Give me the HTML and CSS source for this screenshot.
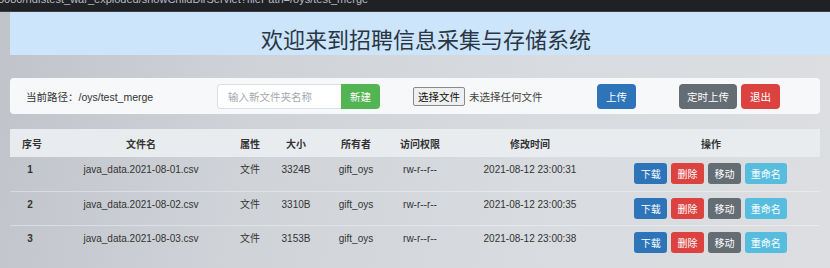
FILE: index.html
```html
<!DOCTYPE html>
<html lang="zh-CN">
<head>
    <meta charset="UTF-8">
    <title>招聘信息采集与存储系统</title>
    <link rel="stylesheet" href="styles.css">
</head>
<body>
<div class="urlbar"><span>8080/hdfstest_war_exploded/showChildDirServlet?filePath=/oys/test_merge</span></div>

<div class="banner">
    <h1>欢迎来到招聘信息采集与存储系统</h1>
</div>

<div class="toolbar">
    <span class="path">当前路径：/oys/test_merge</span>
    <input type="text" class="dirname" placeholder="输入新文件夹名称">
    <button class="btn btn-green btn-new">新建</button>
    <div class="picker">
        <span class="pick-btn">选择文件</span>
        <span class="pick-text">未选择任何文件</span>
    </div>
    <button class="btn btn-blue btn-up">上传</button>
    <button class="btn btn-gray btn-timer">定时上传</button>
    <button class="btn btn-red btn-exit">退出</button>
</div>

<table class="files">
    <colgroup>
        <col style="width:44px">
        <col style="width:174px">
        <col style="width:44px">
        <col style="width:48px">
        <col style="width:72px">
        <col style="width:56px">
        <col style="width:164px">
        <col>
    </colgroup>
    <thead>
        <tr>
            <th>序号</th>
            <th>文件名</th>
            <th>属性</th>
            <th>大小</th>
            <th>所有者</th>
            <th>访问权限</th>
            <th>修改时间</th>
            <th class="ops">操作</th>
        </tr>
    </thead>
    <tbody>
        <tr>
            <td class="num">1</td>
            <td>java_data.2021-08-01.csv</td>
            <td>文件</td>
            <td>3324B</td>
            <td>gift_oys</td>
            <td>rw-r--r--</td>
            <td>2021-08-12 23:00:31</td>
            <td class="ops">
                <button class="sm btn-blue">下载</button>
                <button class="sm btn-red">删除</button>
                <button class="sm btn-gray">移动</button>
                <button class="sm btn-cyan">重命名</button>
            </td>
        </tr>
        <tr>
            <td class="num">2</td>
            <td>java_data.2021-08-02.csv</td>
            <td>文件</td>
            <td>3310B</td>
            <td>gift_oys</td>
            <td>rw-r--r--</td>
            <td>2021-08-12 23:00:35</td>
            <td class="ops">
                <button class="sm btn-blue">下载</button>
                <button class="sm btn-red">删除</button>
                <button class="sm btn-gray">移动</button>
                <button class="sm btn-cyan">重命名</button>
            </td>
        </tr>
        <tr>
            <td class="num">3</td>
            <td>java_data.2021-08-03.csv</td>
            <td>文件</td>
            <td>3153B</td>
            <td>gift_oys</td>
            <td>rw-r--r--</td>
            <td>2021-08-12 23:00:38</td>
            <td class="ops">
                <button class="sm btn-blue">下载</button>
                <button class="sm btn-red">删除</button>
                <button class="sm btn-gray">移动</button>
                <button class="sm btn-cyan">重命名</button>
            </td>
        </tr>
    </tbody>
</table>
</body>
</html>
```

FILE: styles.css
```css
* {
    margin: 0;
    padding: 0;
    box-sizing: border-box;
}

body {
    width: 830px;
    height: 268px;
    overflow: hidden;
    font-family: "Liberation Sans", "Noto Sans CJK SC", sans-serif;
    color: #333;
    background: linear-gradient(100deg, #c0c4ca 0%, #cfd3d8 30%, #d8dbdf 65%, #dcdee1 100%);
}

.urlbar {
    height: 12px;
    overflow: hidden;
    background-color: #202124;
    border-bottom: 1px solid #3a3c40;
}

.urlbar span {
    display: block;
    margin: -7px 0 0 -2px;
    font-size: 11px;
    line-height: 13px;
    color: #b8bcc2;
    white-space: nowrap;
}

.banner {
    margin-left: 10px;
    height: 43px;
    background-color: #cce5fb;
    text-align: center;
}

.banner h1 {
    font-family: "Noto Sans CJK SC", sans-serif;
    font-weight: 400;
    font-size: 22px;
    line-height: 43px;
    padding-top: 5px;
    padding-left: 12px;
    color: #2a3644;
}

.toolbar {
    display: flex;
    align-items: center;
    height: 36px;
    margin: 23px 10px 0 10px;
    padding-left: 16px;
    background-color: #f7f8fa;
    border-radius: 4px;
    font-size: 10.5px;
}

.path {
    flex: 0 0 191px;
    font-family: "Liberation Sans", "Noto Sans CJK SC", sans-serif;
    color: #333;
}

.dirname {
    width: 124px;
    height: 25px;
    padding-left: 10px;
    border: 1px solid #dcdfe3;
    border-right: none;
    border-radius: 4px 0 0 4px;
    background-color: #fff;
    outline: none;
    font-family: "Noto Sans CJK SC", sans-serif;
    font-size: 10.5px;
}

.dirname::placeholder {
    color: #a4a8ad;
}

.btn {
    height: 25px;
    border: none;
    border-radius: 4px;
    color: #fff;
    font-family: "Noto Sans CJK SC", sans-serif;
    font-size: 10.5px;
}

.btn-new {
    width: 39px;
    border-radius: 0 4px 4px 0;
}

.picker {
    display: flex;
    align-items: center;
    flex: 0 0 184px;
    margin-left: 33px;
}

.pick-btn {
    display: inline-block;
    width: 52px;
    height: 19px;
    line-height: 17px;
    text-align: center;
    border: 1px solid #8a8a8a;
    border-radius: 2px;
    background-color: #efefef;
    color: #111;
    font-family: "Noto Sans CJK SC", sans-serif;
    font-size: 10.5px;
}

.pick-text {
    margin-left: 4px;
    font-family: "Noto Sans CJK SC", sans-serif;
    color: #444;
}

.btn-up {
    width: 39px;
}

.btn-timer {
    width: 58px;
    margin-left: 43px;
}

.btn-exit {
    width: 39px;
    margin-left: 4px;
}

.btn-green {
    background-color: #53b453;
}

.btn-blue {
    background-color: #2e74b9;
}

.btn-gray {
    background-color: #646c74;
}

.btn-red {
    background-color: #dc4240;
}

.btn-cyan {
    background-color: #56bddf;
}

.files {
    width: 810px;
    margin: 15px 10px 0 10px;
    border-collapse: collapse;
    table-layout: fixed;
    font-size: 10px;
}

.files th {
    height: 28px;
    background-color: #e9ecef;
    font-family: "Noto Sans CJK SC", sans-serif;
    font-weight: 700;
    font-size: 10px;
    color: #333;
    text-align: center;
    vertical-align: middle;
}

.files td {
    height: 34px;
    padding-top: 6px;
    line-height: 14px;
    text-align: center;
    vertical-align: top;
    border-top: 1px solid rgba(255, 255, 255, 0.35);
    color: #333;
}

.files tbody tr:first-child td {
    border-top: none;
}

.files td.num {
    font-weight: 700;
    padding-right: 4px;
}

.files .ops {
    padding-right: 10px;
}

.sm {
    height: 21px;
    width: 33px;
    margin-right: 1px;
    border: none;
    border-radius: 3px;
    color: #fff;
    font-family: "Noto Sans CJK SC", sans-serif;
    font-size: 10px;
}

.sm.btn-cyan {
    width: 42px;
}
```
